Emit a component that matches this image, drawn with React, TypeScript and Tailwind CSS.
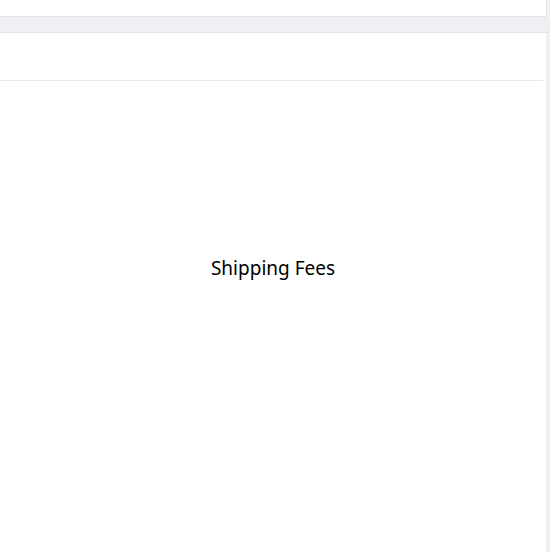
export default function App() {
  return (
    <div className="w-[550px] h-[552px] bg-[#f0f1f4] flex flex-col overflow-hidden" style={{ fontFamily: '"Noto Sans", sans-serif' }}>
      <div className="h-[17px] bg-white border-b border-r border-[#e3e4e8] mr-[3px]" />
      <div className="h-[16px] bg-[#eff0f3] border-b border-[#e4e5e8]" />
      <div className="flex-1 flex mr-[3px] bg-white border-r border-[#eceef0]">
        <div className="flex-1 flex flex-col">
          <div className="h-[48px] border-b border-[#e8e9ec] mr-[3px]" />
          <div className="flex-1 bg-white flex justify-center pt-[175px]">
            <span className="text-[19px] leading-[24px] text-black">Shipping Fees</span>
          </div>
        </div>
      </div>
    </div>
  );
}
